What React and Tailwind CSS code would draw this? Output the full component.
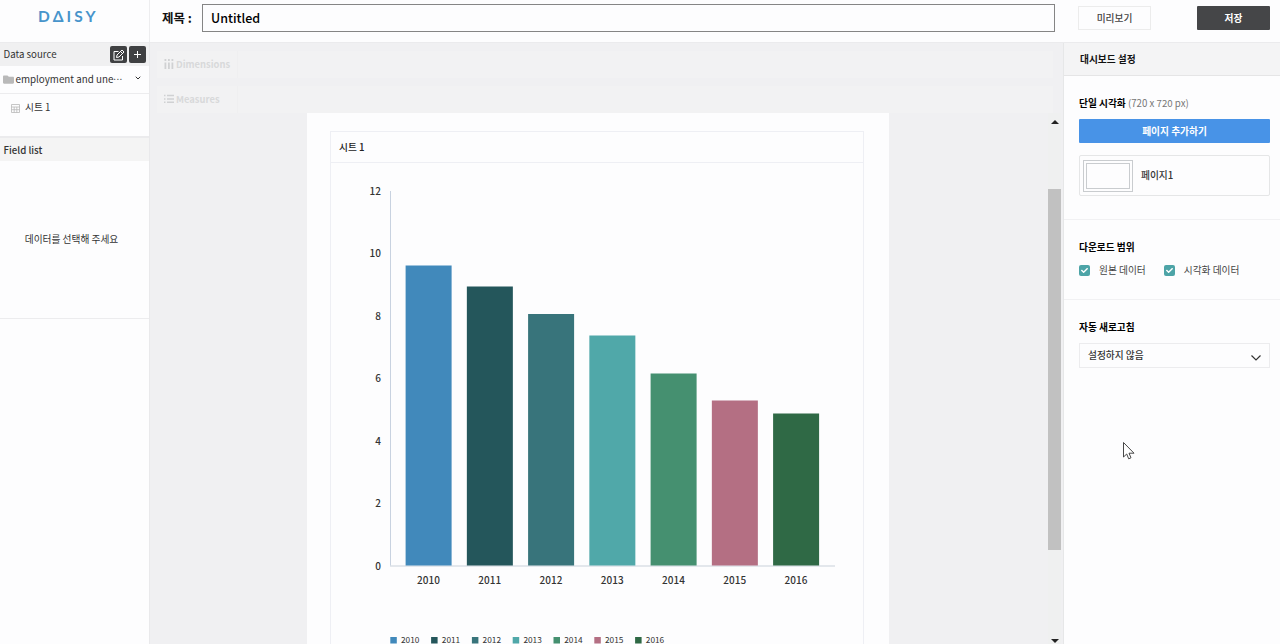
import { FaFolder, FaCheck } from "react-icons/fa";
import { FiChevronDown } from "react-icons/fi";

const bars = [
  { year: 2010, top: 265.5, color: '#4189bb' },
  { year: 2011, top: 286.5, color: '#24565b' },
  { year: 2012, top: 314, color: '#38747b' },
  { year: 2013, top: 335.5, color: '#50a8a9' },
  { year: 2014, top: 373.5, color: '#459070' },
  { year: 2015, top: 400.5, color: '#b46f83' },
  { year: 2016, top: 413.5, color: '#2f6945' },
]
const ticks = [12, 10, 8, 6, 4, 2, 0]

function Chart(){
  return (
    <svg viewBox="331 163 532 481" className="block h-[481px] w-[532px] text-[10px] font-medium" fill="#333">
      {ticks.map(t => (
        <text key={t} x="381" y={569.5 - t * 31.22} textAnchor="end">{t}</text>
      ))}
      <path d="M390.5 191V566" stroke="#c8d2e0" strokeWidth="1" />
      <path d="M390 566H835" stroke="#dadfe6" strokeWidth="1.5" />
      {bars.map((b, i) => (
        <g key={b.year}>
          <rect x={405.6 + i * 61.25} y={b.top} width="46" height={565.5 - b.top} fill={b.color} />
          <text x={428.5 + i * 61.25} y="583.5" textAnchor="middle">{b.year}</text>
          <rect x={390.3 + i * 40.8} y="637" width="6.5" height="6.5" fill={b.color} />
          <text x={401 + i * 40.8} y="642.5" fontSize="8.3" fontWeight="400">{b.year}</text>
        </g>
      ))}
    </svg>
  )
}

function EditIcon(){
  return (
    <svg viewBox="0 0 12 12" className="size-3" fill="none" stroke="#fff" strokeWidth="1">
      <path d="M5.500 2.500H1v8.500h8.500V7" />
      <path d="M3.500 8.500l.5-2.500 5-5 2 2-5 5zM7.500 2.500l2 2" />
    </svg>
  )
}

function SheetIcon(){
  return (
    <svg viewBox="0 0 9 9" className="size-[9px]" fill="none" stroke="#b9b9b9" strokeWidth=".8">
      <path d="M.5.5h8v8h-8zM.5 3h8M.5 5.700h8M3.200 3v5.500M5.800 3v5.500" />
    </svg>
  )
}

function DimensionsIcon(){
  return (
    <svg viewBox="0 0 10 10" className="size-2.5" fill="#d0d1d3">
      <path d="M.5 0h1.800v2H.5zM4 0h1.800v2H4zM7.500 0h1.800v2H7.500zM.5 3.500h1.800V10H.5zM4 3.500h1.800V10H4zM7.500 3.500h1.800V10H7.500z" />
    </svg>
  )
}

function MeasuresIcon(){
  return (
    <svg viewBox="0 0 10 10" className="size-2.5" fill="#d0d1d3">
      <path d="M0 .8h1.500v1.500H0zM0 4.200h1.500v1.500H0zM0 7.600h1.500v1.500H0zM3 .8h7v1.500H3zM3 4.200h7v1.500H3zM3 7.600h7v1.500H3z" />
    </svg>
  )
}

function Header(){
  return (
    <header className="flex h-[43px] shrink-0 border-b border-[#ebebed]">
      <div className="w-[150px] shrink-0 border-r border-[#ededef] pt-1 pl-[38px]">
        <p className="font-['Lato'] text-[15.5px] leading-6 font-bold tracking-[3px] text-[#4794cb]">DΔISY</p>
      </div>
      <div className="flex grow pt-1 pl-3">
        <p className="w-10 shrink-0 text-[12.5px] leading-7 font-bold whitespace-nowrap text-[#111]">제목 :</p>
        <div className="h-7 w-[853px] border border-[#858585] pl-2 text-[12.5px] leading-[26px] font-medium text-black">Untitled</div>
      </div>
      <div className="flex w-[202px] shrink-0 justify-between pt-1.5 pr-2.5">
        <button className="h-6 w-[73px] border border-[#ececec] text-[9.7px] leading-[22px] font-medium text-[#444]">미리보기</button>
        <button className="h-6 w-[73px] rounded-[1px] bg-[#454648] text-[9.7px] leading-6 font-bold text-white">저장</button>
      </div>
    </header>
  )
}

function Sidebar(){
  return (
    <aside className="w-[150px] shrink-0 border-r border-[#e9e9eb] text-[#333]">
      <div className="flex h-[23px] items-center bg-[#f0f0f1] pr-[3px] pl-[3.5px]">
        <p className="grow pb-px text-[9.7px]">Data source</p>
        <div className="flex gap-0.5">
          <button className="grid size-[17px] place-items-center rounded-xs bg-[#3f4042]"><EditIcon /></button>
          <button className="grid size-[17px] place-items-center rounded-xs bg-[#3f4042]">
            <svg viewBox="0 0 9 9" className="size-[9px]" stroke="#fff"><path d="M4.500 1v7M1 4.500h7" /></svg>
          </button>
        </div>
      </div>
      <div className="flex h-[28px] items-center border-b border-[#ececee] pr-[7px] pl-[3px]">
        <FaFolder className="size-[11px] text-[#b9b9b9]" />
        <p className="grow pl-[1.5px] text-[9.8px] whitespace-nowrap">employment and une<span lang="ko" className="tracking-[0.4px]">···</span></p>
        <FiChevronDown className="mb-1 size-2" strokeWidth="3" />
      </div>
      <div className="flex h-[42px] gap-[5px] pl-[11px]">
        <div className="pt-[10px]"><SheetIcon /></div>
        <p className="pt-[4px] text-[9.7px] leading-[18px]">시트 1</p>
      </div>
      <div className="h-[25px] border-t-2 border-[#ebebed] bg-[#f4f4f4] pl-[3.5px] text-[9.7px] leading-[24px] font-medium">Field list</div>
      <p className="h-[158px] border-b border-[#ececee] pr-[6px] text-center text-[9.7px] leading-[156px]">데이터를 선택해 주세요</p>
    </aside>
  )
}

function Shelf({ icon, label }){
  return (
    <div className="flex h-[27px] items-center bg-[#f2f2f3] text-[9.4px] font-bold text-[#d8d9da]">
      <div className="flex h-full w-[81px] items-center gap-0.5 border-r border-[#efeff0] pb-px pl-[7px]">
        {icon}
        <p>{label}</p>
      </div>
    </div>
  )
}

function Workspace(){
  return (
    <main className="flex h-[601px] w-[913px] shrink-0 flex-col overflow-hidden bg-[#f0f0f2]">
      <div className="flex shrink-0 flex-col gap-2 pt-2 pr-2.5 pl-[7px]">
        <Shelf icon={<DimensionsIcon />} label="Dimensions" />
        <Shelf icon={<MeasuresIcon />} label="Measures" />
      </div>
      <div className="flex min-h-0 grow justify-between">
        <div className="ml-[157px] w-[582px] bg-[#fdfdfe] px-[23px] pt-[18px]">
          <section className="w-[534px] border border-[#eeeff4]">
            <h2 className="h-[31px] border-b border-[#eeeff4] pl-2 text-[9.7px] leading-[30px] font-medium text-[#222]">시트 1</h2>
            <Chart />
          </section>
        </div>
        <div className="mr-0.5 flex w-[13px] flex-col items-center justify-between bg-[#eff0f0] pt-[7px]">
          <svg viewBox="0 0 8 4" className="h-1 w-2" fill="#222"><path d="M0 4l4-4 4 4z" /></svg>
          <div className="mb-[25px] h-[361px] w-full bg-[#c1c1c1]" />
          <svg viewBox="0 0 8 4" className="mb-px h-1 w-2" fill="#222"><path d="M0 0h8L4 4z" /></svg>
        </div>
      </div>
    </main>
  )
}

function Check({ label }){
  return (
    <label className="flex items-center">
      <span className="mt-px grid size-[11px] place-items-center rounded-xs bg-[#4da4a7]"><FaCheck className="size-[7px] text-white" /></span>
      <span className="pl-[9px] text-[#444]">{label}</span>
    </label>
  )
}

function Settings(){
  return (
    <aside className="relative grow border-l border-[#e6e7e8] text-[9.7px] text-[#333]">
      <h2 className="h-[33px] border-b border-[#e5e5e6] bg-[#f4f4f5] pl-4 leading-8 font-bold text-[#111]">대시보드 설정</h2>
      <section className="h-[144px] border-b border-[#f1f1f3] pt-[18px] pr-2.5 pl-[15px]">
        <p className="h-[25px] leading-[18px]"><b className="text-black">단일 시각화</b> <span className="text-[#777]">(720 x 720 px)</span></p>
        <button className="block h-6 w-full rounded-[1px] bg-[#4893e7] text-center font-bold text-white">페이지 추가하기</button>
        <div className="mt-3 flex h-[41px] items-center gap-2 rounded-xs border border-[#e5e6e7] pl-[3px]">
          <div className="h-8 w-[50px] border border-[#c9cccf] p-0.5">
            <div className="h-full border border-[#c9cccf]" />
          </div>
          <p className="pb-px font-medium">페이지1</p>
        </div>
      </section>
      <section className="h-20 border-b border-[#f1f1f3] pt-[18px] pl-[15px]">
        <h3 className="leading-[18px] font-bold text-black">다운로드 범위</h3>
        <div className="mt-[7px] flex gap-[18px]">
          <Check label="원본 데이터" />
          <Check label="시각화 데이터" />
        </div>
      </section>
      <section className="pt-[18px] pr-2.5 pl-[15px]">
        <h3 className="leading-[18px] font-bold text-black">자동 새로고침</h3>
        <div className="mt-[7px] flex h-[25px] items-center justify-between border border-[#ececee] pr-[7px] pl-2 font-medium">
          <p>설정하지 않음</p>
          <svg viewBox="0 0 12 12" className="mt-1 size-3" fill="none" stroke="#333" strokeWidth="1.2"><path d="M1.500 3.500L6 8l4.500-4.500" /></svg>
        </div>
      </section>
      {/* mouse pointer */}
      <svg viewBox="0 0 12 18" className="absolute top-[399px] left-[59px] h-[18px] w-3" fill="#fff" stroke="#333" strokeWidth=".9">
        <path d="M.5.5v14.500l3.200-3 2 4.800 2.300-1-2-4.600h5z" />
      </svg>
    </aside>
  )
}

export default function App(){
  return (
    <div className="flex h-[644px] w-[1280px] flex-col overflow-hidden bg-[#fdfdfe] font-['Noto_Sans_CJK_KR',sans-serif]">
      <Header />
      <div className="flex min-h-0 grow">
        <Sidebar />
        <Workspace />
        <Settings />
      </div>
    </div>
  )
}
